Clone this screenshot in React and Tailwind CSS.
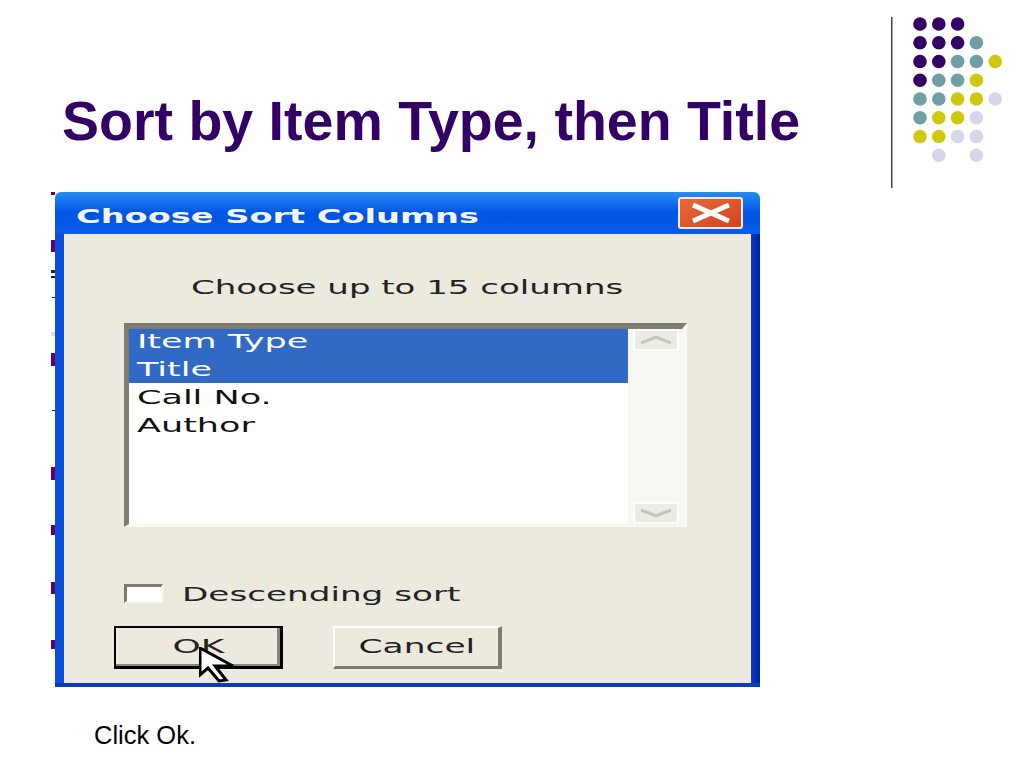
import React from "react";

const purple = "#330066";
const teal = "#6f9fa3";
const olive = "#cfc90e";
const lilac = "#d6d6e8";

// decoration dots, [colour per column], null where there is no dot
const dotRows = [
  [purple, purple, purple, null, null],
  [purple, purple, purple, teal, null],
  [purple, purple, teal, teal, olive],
  [purple, teal, teal, olive, null],
  [teal, teal, olive, olive, lilac],
  [teal, olive, olive, lilac, null],
  [olive, olive, lilac, lilac, null],
  [null, lilac, null, lilac, null],
];

const Dots = () => (
  <svg width="133" height="172" viewBox="0 0 133 172" className="shrink-0">
    <rect x="0" y="0" width="1.5" height="171" fill="#444" />
    {dotRows.map((row, r) =>
      row.map((c, i) =>
        c ? <circle key={r + "-" + i} cx={29 + i * 18.8} cy={7 + r * 18.75} r="6.8" fill={c} /> : null
      )
    )}
  </svg>
);

// leftovers of the slide bullets sticking out behind the dialog
const LeftMarks = () => (
  <svg width="4" height="495" viewBox="0 0 4 495" className="shrink-0">
    <rect x="0" y="0" width="4" height="3" fill="#660066" />
    <rect x="0" y="48" width="4" height="12" fill="#660066" />
    <rect x="0" y="78" width="4" height="3" fill="#222" />
    <rect x="0" y="84" width="4" height="2" fill="#222" />
    <rect x="1" y="105" width="3" height="1" fill="#222" />
    <rect x="0" y="140" width="4" height="4" fill="#cfe3ea" />
    <rect x="0" y="161" width="4" height="13" fill="#660066" />
    <rect x="1" y="218" width="3" height="1" fill="#222" />
    <rect x="0" y="275" width="4" height="13" fill="#660066" />
    <rect x="0" y="333" width="4" height="10" fill="#660066" />
    <rect x="0" y="390" width="4" height="12" fill="#660066" />
    <rect x="0" y="448" width="4" height="9" fill="#660066" />
  </svg>
);

const Stretch = ({ className, children }) => (
  <span className={"inline-block origin-left whitespace-nowrap " + className}>{children}</span>
);

const ListRow = ({ label, selected, className }) => (
  <div className={"pl-[8px] flex items-center text-[20px] " + (selected ? "bg-[#316ac5] text-white " : "text-[#111] ") + className}>
    <Stretch className="scale-x-[1.75]">{label}</Stretch>
  </div>
);

const ScrollBtn = ({ up }) => (
  <div className="w-[46px] h-[22px] ml-[5px] bg-[#ecebe4] border-2 border-white flex items-center justify-center">
    <svg width="34" height="10" viewBox="0 0 34 10">
      <path d={up ? "M2 8 L17 2 L32 8" : "M2 2 L17 8 L32 2"} fill="none" stroke="#c4c4bc" strokeWidth="3" />
    </svg>
  </div>
);

const XpButton = ({ label, focused, textClass, children }) => (
  <div
    className={
      "relative w-[169px] h-[43px] bg-[#ece9de] flex items-center justify-center pb-[3px] text-[20px] text-[#222] border-solid " +
      (focused
        ? "border-2 border-black border-r-[3px] border-b-[3px] shadow-[inset_-3px_-2px_0_#8a867a]"
        : "border-t-2 border-l-2 border-t-white border-l-white border-r-[4px] border-b-[3px] border-r-[#7f7b6f] border-b-[#7f7b6f]")
    }
  >
    <span className={"inline-block whitespace-nowrap " + textClass}>{label}</span>
    {children}
  </div>
);

export default function App() {
  return (
    <div className="w-[1024px] h-[768px] overflow-hidden bg-white font-['Liberation_Sans',Arial,sans-serif]">
      <div className="h-[192px] flex justify-between pl-[62px] pr-0">
        <h1 className="pt-[86px] text-[55.5px] leading-[70px] font-bold text-[#330066] whitespace-nowrap">
          Sort by Item Type, then Title
        </h1>
        <div className="pt-[17px]">
          <Dots />
        </div>
      </div>

      <div className="flex pl-[51px]">
        <LeftMarks />
        {/* dialog */}
        <div className="w-[705px] h-[495px] flex flex-col font-['DejaVu_Sans',sans-serif]">
          <div className="h-[42px] rounded-t-[6px] bg-gradient-to-b from-[#2b8cf2] via-[#0054e3] to-[#0a5ce8] flex items-center justify-between pl-[21px] pr-[17px]">
            <div className="pt-[5px]">
              <Stretch className="scale-x-[1.68] text-[20px] font-bold text-[#f4f4f4]">Choose Sort Columns</Stretch>
            </div>
            <div className="w-[65px] h-[32px] rounded-[3px] border-2 border-[#f0ece8] bg-gradient-to-br from-[#e8683c] to-[#d4421a] flex items-center justify-center">
              <svg width="42" height="22" viewBox="0 0 42 22">
                <path d="M3 3 L39 19 M39 3 L3 19" stroke="#fff" strokeWidth="5" />
              </svg>
            </div>
          </div>

          <div className="flex-1 flex bg-[#0a50dc]">
            <div className="w-[9px] bg-[#0a50dc]" />
            <div className="w-[687px] bg-[#ece9de] flex flex-col text-[#222]">
              <div className="pt-[41px] pl-[127px] h-[65px] text-[20px] leading-[24px]">
                <Stretch className="scale-x-[1.7]">Choose up to 15 columns</Stretch>
              </div>

              <div className="ml-[60px] mt-[24px] w-[563px] h-[204px] flex border-solid border-t-[6px] border-l-[5px] border-r-[5px] border-b-[3px] border-t-[#7f7b6f] border-l-[#7f7b6f] border-r-[#f8f7f2] border-b-[#f8f7f2]">
                <div className="w-[499px] bg-white">
                  <ListRow label="Item Type" selected className="h-[27px] pb-[4px]" />
                  <ListRow label="Title" selected className="h-[27px] pb-[2px]" />
                  <ListRow label="Call No." className="h-[28px]" />
                  <ListRow label="Author" className="h-[28px]" />
                </div>
                <div className="w-[54px] bg-[#f7f6f1] flex flex-col justify-between">
                  <ScrollBtn up />
                  <ScrollBtn />
                </div>
              </div>

              <div className="ml-[60px] mt-[57px] h-[19px] flex items-center">
                <div className="w-[39px] h-[19px] bg-white border-solid border-t-[3px] border-l-[3px] border-r-2 border-b-2 border-t-[#7f7b6f] border-l-[#7f7b6f] border-r-[#f8f7f2] border-b-[#f8f7f2]" />
                <div className="ml-[19px] text-[20px]">
                  <Stretch className="scale-x-[1.71]">Descending sort</Stretch>
                </div>
              </div>

              <div className="ml-[50px] mt-[23px] flex gap-[50px]">
                <XpButton label="OK" focused textClass="scale-x-[1.8]">
                  <svg width="38" height="36" viewBox="0 0 38 36" className="absolute left-[83px] top-[19px]">
                    <path d="M1 1 L1 28 L9 21 L20 34 L27 33 L16 19 L34 19 Z" fill="#fff" stroke="#000" strokeWidth="3" />
                  </svg>
                </XpButton>
                <XpButton label="Cancel" textClass="scale-x-[1.72]" />
              </div>
            </div>
            <div className="w-[9px] bg-gradient-to-r from-[#0a3cc8] to-[#00209c]" />
          </div>
          <div className="h-[4px] bg-[#0a3cc0]" />
        </div>
      </div>

      <p className="mt-[34px] pl-[94px] text-[25.5px] leading-[28px] text-black">Click Ok.</p>
    </div>
  );
}
